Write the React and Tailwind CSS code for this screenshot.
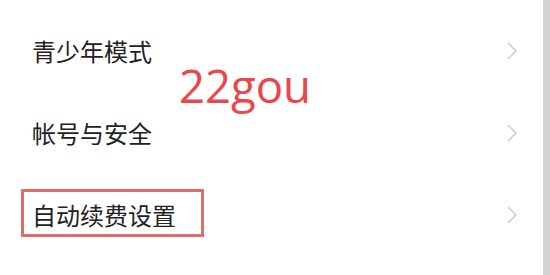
import React from "react";

function Chevron() {
  return (
    <svg width="11" height="18" viewBox="0 0 11 18" className="block">
      <polyline points="1.5,1.5 9,9 1.5,16.5" fill="none" stroke="#c8c8c8" strokeWidth="1.4" strokeLinecap="round" strokeLinejoin="round" />
    </svg>
  );
}

function Row({ label, boxed }) {
  return (
    <div className="relative flex h-[82px] items-center justify-between pl-[32px] pr-[25px]">
      <span className="text-[24px] leading-none text-[#222222]" style={{ fontFamily: '"Noto Sans CJK SC", "Noto Sans", sans-serif' }}>
        {label}
      </span>
      <Chevron />
      {boxed && (
        <div className="pointer-events-none absolute left-[21px] top-[15px] h-[48px] w-[183px] border-[3px] border-[#e56a6a]" />
      )}
    </div>
  );
}

export default function App() {
  return (
    <div className="relative flex h-[275px] w-[550px] overflow-hidden bg-white">
      <div className="flex-1 pt-[10px]">
        <Row label="青少年模式" />
        <Row label="帐号与安全" />
        <Row label="自动续费设置" boxed />
      </div>
      <div className="w-[7px] bg-[#d4d4d4]" />
      <div
        className="pointer-events-none absolute left-[179px] top-[63px] text-[45.5px] leading-none text-[#e8474b]"
        style={{ fontFamily: '"Open Sans", sans-serif' }}
      >
        22gou
      </div>
    </div>
  );
}
